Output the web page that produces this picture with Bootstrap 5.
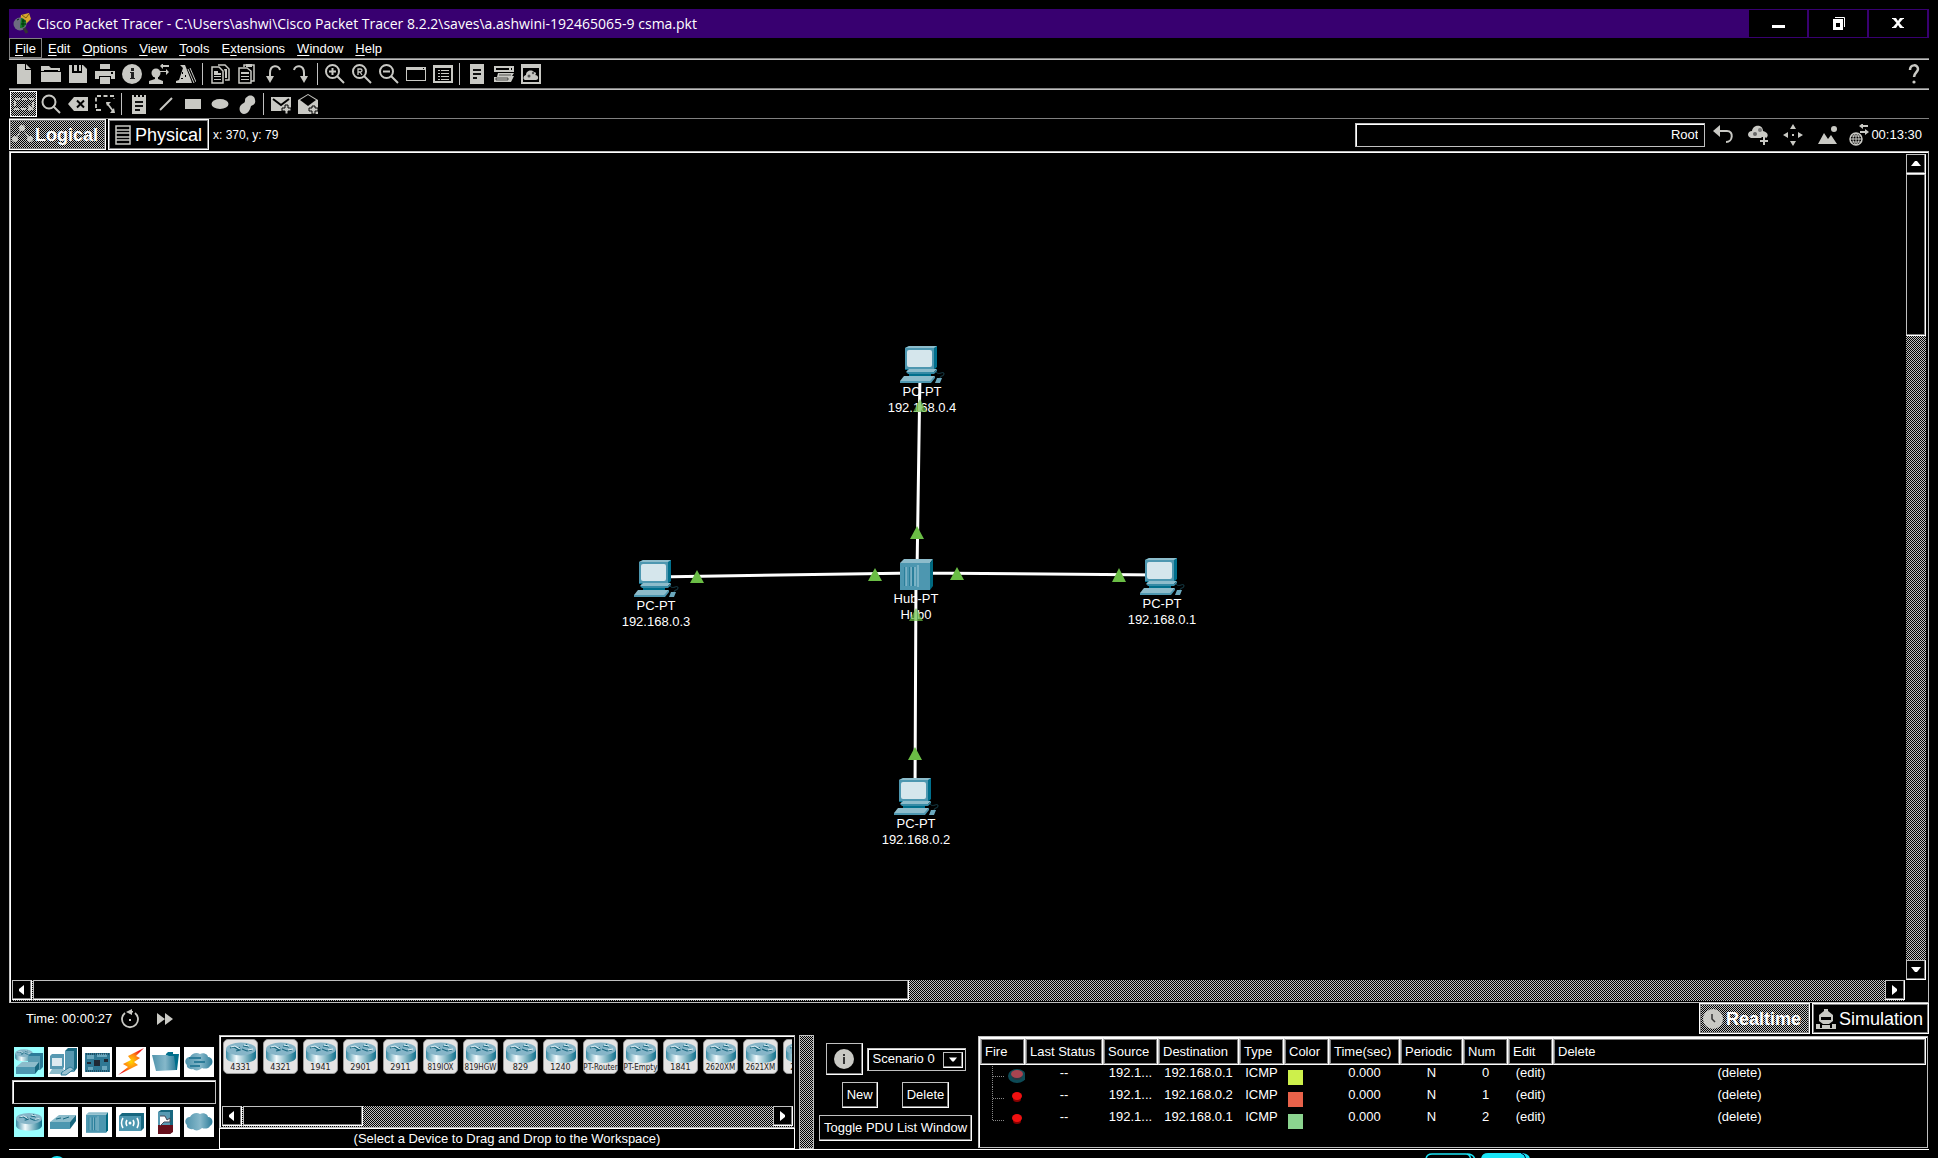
<!DOCTYPE html>
<html lang="en">
<head>
<meta charset="utf-8">
<meta name="viewport" content="width=device-width, initial-scale=1">
<title>Cisco Packet Tracer</title>
<link rel="stylesheet" href="https://cdn.jsdelivr.net/npm/bootstrap@5.3.0/dist/css/bootstrap.min.css">
<script src="https://cdn.jsdelivr.net/npm/bootstrap@5.3.0/dist/js/bootstrap.bundle.min.js"></script>
<style>
:root{--ic:#c9c9c4;--edge:#c0c0c0;--dim:#808080}
body{background:#000;color:#fff;font:13px/16px "Liberation Sans",Arial,sans-serif}
button{background:#000;color:inherit;padding:0;border:0;font:inherit}
svg{display:block;flex:none}
.app{height:100vh;padding:9px 9px 0}
.dither{background:conic-gradient(#c0c0c0 25%,#000 0 50%,#c0c0c0 0 75%,#000 0) 0 0/2px 2px}
.titlebar{height:29px;background:#380070;font:14px/29px "Open Sans",sans-serif}
.winbtn{width:58px;height:27px}
.winbtns{gap:2px;padding:1px 2px 1px 0}
.menurow{height:22px;border-bottom:1px solid var(--edge);box-shadow:inset 0 -1px var(--dim)}
.menurow button{height:20px;padding:1px 5px 0;border:1px solid transparent}
.menurow button.open{border-color:var(--dim)}
.menurow u{text-underline-offset:2px}
.toolrow{height:30px;padding:0 2px 2px 1px;border-bottom:1px solid var(--edge);box-shadow:inset 0 -1px var(--dim)}
.toolrow.second{height:29px;padding-bottom:1px;border-bottom-color:var(--dim);box-shadow:none}
.tool{width:27px;height:26px;display:flex;align-items:center;justify-content:center;color:var(--ic)}
.tool svg{width:20px;height:20px}
.tool.on{border:1px solid #fff}
.vsep{width:1px;height:22px;background:var(--edge);margin:0 3px}
.ic{fill:currentColor;color:var(--ic)}
.ln{fill:none;stroke:currentColor;stroke-width:2}
.raised{border:1px solid #fff;border-top-color:var(--edge);border-left-color:var(--edge);box-shadow:inset -1px -1px var(--dim)}
.sunken{border:1px solid var(--edge);box-shadow:inset 1px 1px #fff}
.modes{gap:2px}
.modebtn{height:31px;font-size:18px;line-height:20px;display:flex;align-items:center;gap:3px;border:1px solid #fff;box-shadow:inset 1px 1px var(--dim),inset -1px -1px var(--dim)}
.logical{width:97px;padding-left:2px;gap:0}.physical{width:101px;padding-left:6px;gap:4px}
.realtime{width:111px;padding-left:3px}.simulation{width:117px;padding-left:3px}
.navrow{height:32px;padding-bottom:1px}
.navrow .tiny{font-size:12px;padding-left:2px}
.rootbox{width:350px;height:24px;background:#000;color:#fff;text-align:right;padding:0 6px}
.tools{gap:8px;padding:0 7px 0 6px}
.navicons{gap:15px;margin-right:-6px}
.navicons svg:last-child{margin-left:-4px}
.workspace{border:1px solid var(--edge);box-shadow:inset 1px 1px #fff;padding:2px 1px 1px 2px;min-height:0}
.canvas-area{min-width:0;min-height:0}
.vbar{width:22px}.hbar{height:21px}
.vbar button{width:20px;height:20px}.hbar button{width:20px;height:20px}
.vthumb{height:162px;width:20px;background:#000}
.hthumb{height:20px;background:#000;margin-left:1px}
.arrow{display:flex;align-items:center;justify-content:center;fill:#fff}
.node{width:80px;text-align:center}
.node svg{margin:0 0 1px 18px}
.node.hub svg{margin:0 0 1px 24px}
.timerow{height:32px;padding:0 0 1px 17px}
.dock{height:115px;border-bottom:1px solid #fff}
.devcol{width:210px;padding:12px 0 0 3px;flex:none}
.devrow{gap:4px;padding-left:2px}
.devrow button{width:30px;height:30px;background:#fff;overflow:hidden}
.devrow button.sel{background:#9ff}
.devbox{width:204px;height:24px;margin:3px 0;background:#000;color:#fff}
.listcol{width:576px;flex:none}
.tiles{height:72px;padding:3px 0 0 3px;margin-right:2px;gap:5px;overflow:hidden}
.tile{width:35px;height:35px;border:1px solid #9a9a9a;border-radius:5px;background:#e4e4e4;color:#222;font:8px/8px "DejaVu Sans",sans-serif;flex:none;white-space:nowrap;display:flex;flex-direction:column;align-items:center;padding-top:2px}
.tile.long{font-family:"DejaVu Sans Condensed","DejaVu Sans",sans-serif}
.listbar{margin:-2px 1px 0 2px}
.hint{height:21px;border:1px solid #fff;line-height:20px}
.split{width:15px;margin:0 4px;border:1px solid var(--edge);flex:none}
.scen{width:155px;padding-top:8px;gap:7px;flex:none}
.scen button{height:26px}
.scen button.scinfo{width:37px;height:32px}
.scensel{appearance:none;width:99px;height:23px;background:#000;color:#fff;padding:0 5px;font:inherit;border-radius:0}
.scenarrow{right:3px;top:4px;width:20px;height:16px;pointer-events:none}
.pdu{flex:1 1 0;margin:1px 1px 1px 5px;padding:1px 1px 0;min-width:0}
.pdu table{table-layout:fixed;width:100%;border-collapse:separate;border-spacing:0}
.pdu th{height:27px;font-weight:400;padding:0 0 0 4px;border:1px solid #fff;box-shadow:inset 1px 1px var(--dim),inset -1px -1px var(--dim);white-space:nowrap;border-left-color:var(--edge)}
.pdu td{height:22px;padding:0 0 6px;text-align:center;white-space:nowrap}
.pdu td:first-child{padding:0}
.pdu td a{color:#fff;text-decoration:none}
.swatch{width:15px;height:15px;margin:2px 0 0 4px}
.pdu td.sw{padding:0}
.taskbar{height:8px;overflow:hidden;flex:none}
</style>
</head>
<body>
<svg width="0" height="0" class="position-absolute" aria-hidden="true">
<defs>
<linearGradient id="gr" x1="0" x2="1"><stop offset="0" stop-color="#3a8ba5"/><stop offset=".35" stop-color="#f2fafc"/><stop offset="1" stop-color="#10718c"/></linearGradient>
<radialGradient id="bolt"><stop offset="0" stop-color="#ffd800"/><stop offset=".5" stop-color="#ff8c10"/><stop offset="1" stop-color="#f01818"/></radialGradient>
<linearGradient id="teal" x1="0" x2="1"><stop offset="0" stop-color="#4f93ac"/><stop offset=".55" stop-color="#86b8ca"/><stop offset="1" stop-color="#2c7c99"/></linearGradient>
<symbol id="router" viewBox="0 0 30 22"><path d="M0 7v8c0 4 7 6 15 6s15-2 15-6V7z" fill="url(#gr)"/><ellipse cx="15" cy="7" rx="15" ry="6.5" fill="#86b5c8"/><path d="M4 6l4-1 5 3M10 9l4-1-1-3M26 8l-5 1-5-2M17 4l5 1-2-3" fill="none" stroke="#17677f" stroke-width="1.2"/><path d="M5 5l4-1 5 3M27 7l-5 1M18 3l5 1" fill="none" stroke="#e4f2f6" stroke-width="1"/></symbol>
<symbol id="pc" viewBox="0 0 45 37"><path d="M5 2l4-2h28v21l-3 3H5z" fill="#006f8c"/><path d="M5 2l4-2h28l-3 2z" fill="#8dbccb"/><path d="M5 2h29v21H5z" fill="#4d97b0"/><rect x="7" y="4" width="25" height="17" rx="2" fill="#d5e6ec"/><path d="M8 23h25l-1 2H7z" fill="#17677f"/><path d="M6 26l3-3h28l-3 3z" fill="#8dbccb"/><path d="M6 26h28l3-3v2l-3 3H8z" fill="#358aa5"/><path d="M9 28h22v3H9z" fill="#006f8c"/><path d="M4 30h31l-4 5H0z" fill="#8dbccb"/><path d="M0 35h30l5-5v2l-4 5H0z" fill="#4d97b0"/><path d="M37 32h5l-2 5h-5z" fill="#6ba8bd"/><path d="M36 26c3 4 8-2 8 2 0 3-4 1-4 4" fill="none" stroke="#173e49"/></symbol>
<symbol id="hub" viewBox="0 0 33 31"><path d="M0 4l4-4h29l-3 4z" fill="#8dbccb"/><path d="M30 4l3-4v27l-3 4z" fill="#00687f"/><path d="M0 4h30v27H0z" fill="#4d97b0"/><path d="M5 8v19M10 8v19M13 8v19" stroke="#2a7f9b" stroke-width="2"/><path d="M6 8v19M11 8v19M15 8v19M18 6v22" stroke="#a9cedb" stroke-width="1"/></symbol>
<symbol id="up" viewBox="0 0 10 10"><path d="M0 7h10L6 2H4z"/></symbol>
<symbol id="down" viewBox="0 0 10 10"><path d="M0 2h10L6 7H4z"/></symbol>
<symbol id="left" viewBox="0 0 10 10"><path d="M7 0v10L2 6V4z"/></symbol>
<symbol id="right" viewBox="0 0 10 10"><path d="M2 0v10l5-4V4z"/></symbol>
<symbol id="cloudy" viewBox="0 0 28 20"><path d="M5 5c2-4 7-5 10-3 3-2 8 0 8 3 5 0 6 7 2 9-1 3-6 3-8 2-3 3-7 3-9 1-4 1-7-2-6-4-3-2-2-8 3-8z" fill="url(#teal)"/></symbol>
</defs>
</svg>

<div class="app d-flex flex-column">
  <header class="titlebar d-flex align-items-center flex-shrink-0">
    <svg width="20" height="22" viewBox="0 0 20 22" class="mx-1"><path d="M8 2l8-2 2 6-5 5-6-3z" fill="#d8a72c"/><path d="M9 2l4 3 3-4" fill="none" stroke="#7b5a10"/><circle cx="7" cy="11" r="6.500" fill="#6d6d80"/><path d="M8 5a6 6 0 0 1 5 6 6 6 0 0 1-6 4z" fill="#117a22"/><path d="M4 7l2-1M9 8h4M8 11h5M10 6v8" stroke="#052c0c"/><path d="M11 15l3 5" stroke="#333" stroke-width="3"/></svg>
    <span>Cisco Packet Tracer - C:\Users\ashwi\Cisco Packet Tracer 8.2.2\saves\a.ashwini-192465065-9 csma.pkt</span>
    <div class="winbtns d-flex ms-auto">
      <button class="winbtn arrow" aria-label="Minimize"><svg width="14" height="14" viewBox="0 0 14 14"><path d="M1 8h13v3H1z"/></svg></button>
      <button class="winbtn arrow" aria-label="Restore"><svg width="14" height="14" viewBox="0 0 14 14"><path d="M2 2h10v11H2zM5 6v4h4V6z" fill-rule="evenodd"/><path d="M4 .5h9.500V10" fill="none" stroke="#fff"/></svg></button>
      <button class="winbtn arrow" aria-label="Close"><svg width="14" height="14" viewBox="0 0 14 14"><path d="M1 1h4l2 3 2-3h4v1h-1L8.500 6l3.500 4h1v1H9L7 8l-2 3H1v-1h1l3.500-4L2 2H1z"/></svg></button>
    </div>
  </header>

  <nav class="menurow d-flex flex-shrink-0" aria-label="Main menu">
    <button class="open"><u>F</u>ile</button><button><u>E</u>dit</button><button><u>O</u>ptions</button><button><u>V</u>iew</button><button><u>T</u>ools</button><button>E<u>x</u>tensions</button><button><u>W</u>indow</button><button><u>H</u>elp</button>
  </nav>

  <div class="toolrow d-flex align-items-center flex-shrink-0" role="toolbar" aria-label="Main toolbar">
    <button class="tool" aria-label="New"><svg class="ic" viewBox="0 0 20 20"><path d="M3 0h8v6h6v14H3z"/><path d="M12 0l5 5h-5z"/></svg></button>
    <button class="tool" aria-label="Open"><svg class="ic" viewBox="0 0 20 20"><path d="M0 2h8l2 2h9v3H0zM0 8h20v10H0z"/><path d="M3 6h14v2H3z" fill="#000"/></svg></button>
    <button class="tool" aria-label="Save"><svg class="ic" viewBox="0 0 20 20"><path d="M1 1h3v8h10V1h1l4 4v14H1z"/><path d="M6 1h3v6H6zM11 1h2v6h-2z"/></svg></button>
    <button class="tool" aria-label="Print"><svg class="ic" viewBox="0 0 20 20"><path d="M5 0h10v5H5zM0 7h20v8h-4v-3H4v3H0zM5 13h10v7H5z"/><path d="M16 8h2v2h-2z" fill="#000"/></svg></button>
    <button class="tool" aria-label="Information"><svg class="ic" viewBox="0 0 20 20"><circle cx="10" cy="10" r="10"/><path d="M9 4h3v3H9zM8 8h4v6h1v1H8v-1h1V9H8z" fill="#222"/></svg></button>
    <button class="tool" aria-label="User profile"><svg class="ic" viewBox="0 0 20 20"><circle cx="7" cy="9" r="4.500"/><path d="M6 12h3v3l5 2v3H0v-3l6-2zM11 2l3-3v2h6v2h-6v2zM20 8l-3-3v2h-6v1h6v3z"/></svg></button>
    <button class="tool" aria-label="Activity wizard"><svg class="ic" viewBox="0 0 20 20"><path d="M4 1l5 0 6 15 1 3H0v-2l3-1L7 4z"/><path d="M12 5l6 14M14 4l6 14" stroke="currentColor"/><path d="M6 8h1v2H6zM9 11h1v2H9zM5 14h2v1H5z" fill="#000"/></svg></button>
    <span class="vsep"></span>
    <button class="tool" aria-label="Copy"><svg class="ic" viewBox="0 0 20 20"><path d="M2 3h7l4 4v12H2z" fill="none" stroke="currentColor" stroke-width="1.500"/><path d="M8 1h7l4 4v11h-4" fill="none" stroke="currentColor" stroke-width="1.500"/><path d="M4 7h4v2h3v2H4zM4 12h7v1H4zM4 15h7v1H4zM14 5h3v9h-2V8z"/></svg></button>
    <button class="tool" aria-label="Paste"><svg class="ic" viewBox="0 0 20 20"><path d="M2 4h8l4 3v12H2zM7 3V1h10v16h-3" fill="none" stroke="currentColor" stroke-width="1.500"/><path d="M9 0h6v3H9zM4 8h8v2H4zM4 12h8v1H4zM4 15h8v1H4z"/></svg></button>
    <button class="tool" aria-label="Undo"><svg class="ic" viewBox="0 0 20 20"><path class="ln" d="M16 6c-1-5-10-6-10 3v6"/><path d="M2 12h8l-4 7z"/></svg></button>
    <button class="tool" aria-label="Redo"><svg class="ic" viewBox="0 0 20 20"><path class="ln" d="M3 6c1-5 10-6 10 3v5"/><path d="M9 12h8l-4 7z"/></svg></button>
    <span class="vsep"></span>
    <button class="tool" aria-label="Zoom in"><svg class="ic" viewBox="0 0 20 20"><circle class="ln" cx="7.500" cy="7.500" r="6.500"/><path class="ln" d="M12 12l7 7M4 7.500h7M7.500 4v7"/></svg></button>
    <button class="tool" aria-label="Zoom reset"><svg class="ic" viewBox="0 0 20 20"><circle class="ln" cx="7.500" cy="7.500" r="6.500"/><path class="ln" d="M12 12l7 7"/><path d="M6 11V5h2.500a1 1 0 0 1 0 3H6M8 8l2 3" fill="none" stroke="currentColor" stroke-width="1.300"/></svg></button>
    <button class="tool" aria-label="Zoom out"><svg class="ic" viewBox="0 0 20 20"><circle class="ln" cx="7.500" cy="7.500" r="6.500"/><path class="ln" d="M12 12l7 7M4 7.500h7"/></svg></button>
    <button class="tool" aria-label="Viewport"><svg class="ic" viewBox="0 0 20 20"><path d="M0 3h20v14H0zM1 6v10h18V6z" fill-rule="evenodd"/><path d="M17 4h1v1h-1z" fill="#000"/></svg></button>
    <button class="tool" aria-label="Workspace list"><svg class="ic" viewBox="0 0 20 20"><path d="M0 1h20v18H0zM2 4v13h16V4z" fill-rule="evenodd"/><path d="M5 6h2v1H5zM8 6h8v1H8zM5 9h2v1H5zM8 9h8v1H8zM5 12h2v1H5zM8 12h8v1H8zM5 15h2v1H5zM8 15h8v1H8z"/></svg></button>
    <span class="vsep"></span>
    <button class="tool" aria-label="Notes"><svg class="ic" viewBox="0 0 20 20"><path d="M3 0h14v20H3z"/><path d="M6 5h8v2H6zM6 9h8v2H6zM6 13h4v2H6z" fill="#111"/></svg></button>
    <button class="tool" aria-label="Custom devices"><svg class="ic" viewBox="0 0 20 20"><path d="M0 2h20v6H0z"/><path d="M2 4h13v2H2zM17 4h1v2h-1z" fill="#000"/><path d="M4 9h16l-2 3h2l-3 6H0v-5h3z"/><path d="M2 14h12v2H2zM5 11h12" stroke="#000" stroke-width=".6"/></svg></button>
    <button class="tool" aria-label="Cluster view"><svg class="ic" viewBox="0 0 20 20"><path d="M0 0h20v20H0zM2 4v14h16V4z" fill-rule="evenodd"/><path d="M4 16c-3-1-1-5 1-5 0-4 5-6 8-3 3 0 2 3 1 3 4 0 4 5 1 5z"/><circle cx="8" cy="12" r="1.500" fill="#555"/><circle cx="12" cy="9" r="1.200" fill="#555"/></svg></button>
    <button class="tool ms-auto" aria-label="Help"><svg class="ic" viewBox="0 0 20 20"><path d="M6 6c0-6 8-6 8-1 0 3-4 4-4 8" fill="none" stroke="currentColor" stroke-width="2.500"/><circle cx="10" cy="18" r="1.600"/></svg></button>
  </div>

  <div class="toolrow second d-flex align-items-center flex-shrink-0" role="toolbar" aria-label="Drawing toolbar">
    <button class="tool on dither" aria-label="Select"><svg class="ic" viewBox="0 0 20 20"><path d="M1 5h18v10H1z" fill="none" stroke="currentColor" stroke-width="2" stroke-dasharray="5 2"/><path d="M14 11l6 3-5 3z"/></svg></button>
    <button class="tool" aria-label="Inspect"><svg class="ic" viewBox="0 0 20 20"><circle class="ln" cx="8" cy="8" r="6.500"/><path class="ln" d="M12 12l7 7"/></svg></button>
    <button class="tool" aria-label="Delete"><svg class="ic" viewBox="0 0 20 20"><path d="M0 10l6-7h14v14H6z"/><path d="M9 6.500l7 7M16 6.500l-7 7" stroke="#000" stroke-width="2"/></svg></button>
    <button class="tool" aria-label="Resize shape"><svg class="ic" viewBox="0 0 20 20"><path d="M1 14V2h18v3" fill="none" stroke="currentColor" stroke-width="1.800" stroke-dasharray="4 2.500"/><path d="M1 16h5M12 9l6 8" stroke="currentColor" stroke-width="1.800"/><path d="M11 8h5l-4 4zM20 19h-5l4-5z"/></svg></button>
    <span class="vsep"></span>
    <button class="tool" aria-label="Place note"><svg class="ic" viewBox="0 0 20 20"><path d="M3 1h2v2h2V1h2v2h2V1h2v2h2V1h2v19H3z"/><path d="M6 7h8v2H6zM6 11h8v2H6zM6 15h5v2H6z" fill="#111"/></svg></button>
    <button class="tool" aria-label="Line"><svg class="ic" viewBox="0 0 20 20"><path class="ln" stroke-width="3" d="M4 16L16 4"/></svg></button>
    <button class="tool" aria-label="Rectangle"><svg class="ic" viewBox="0 0 20 20"><path d="M2 5h16v10H2z"/></svg></button>
    <button class="tool" aria-label="Ellipse"><svg class="ic" viewBox="0 0 20 20"><ellipse cx="10" cy="10" rx="8.500" ry="5"/></svg></button>
    <button class="tool" aria-label="Freeform"><svg class="ic" viewBox="0 0 20 20"><path d="M10 3c3-3 8-1 8 3 1 3-1 5-4 6-1 4-3 8-7 8s-6-6-3-9c2-2 4-2 4-4 0-2 0-3 2-4z"/></svg></button>
    <span class="vsep"></span>
    <button class="tool" aria-label="Add simple PDU"><svg class="ic" viewBox="0 0 20 20"><path d="M0 3h20v14H0z"/><path d="M2 5l8 6 8-6" fill="none" stroke="#000" stroke-width="2"/><path d="M14 11h3v3h3v3h-3v3h-3v-3h-3v-3h3z" stroke="#000"/></svg></button>
    <button class="tool" aria-label="Add complex PDU"><svg class="ic" viewBox="0 0 20 20"><path d="M0 6l10-6 10 6v14H0z"/><path d="M2 6l8-5 8 5-8 6z" fill="#000"/><path d="M14 12h3v2h3v3h-3v3h-3v-3h-3v-3h3z" stroke="#000"/></svg></button>
  </div>

  <div class="navrow modes d-flex align-items-start flex-shrink-0">
    <button class="modebtn logical dither fw-bold"><svg class="ic" width="23" height="20" viewBox="0 0 23 20"><path d="M4 14L10 3l8 11" fill="none" stroke="currentColor"/><circle cx="10" cy="3" r="3"/><circle cx="3" cy="14" r="3"/><circle cx="18" cy="14" r="3"/></svg>Logical</button>
    <button class="modebtn physical"><svg class="ic" width="16" height="20" viewBox="0 0 16 20"><path d="M1 1h14v18H1zM1 5h14M1 8h14M1 12h14M1 15h14" fill="none" stroke="currentColor" stroke-width="1.500"/></svg>Physical</button>
    <span class="tiny align-self-center">x: 370, y: 79</span>
    <div class="tools d-flex align-items-center ms-auto align-self-center">
      <input class="rootbox sunken" aria-label="Current location" value="Root">
      <div class="navicons d-flex">
      <svg class="ic" width="20" height="22" viewBox="0 0 20 22"><path class="ln" d="M5 7h9c7 0 6 11-1 11"/><path d="M0 7l7-6v12z"/></svg>
      <svg class="ic" width="20" height="22" viewBox="0 0 20 22"><path d="M3 14c-5-2-3-7 1-7 1-7 11-7 11 0 5 1 6 5 3 7z"/><circle cx="7" cy="10" r="2" fill="#666"/><circle cx="12" cy="6" r="2" fill="#777"/><path d="M11 17h9M15.500 13v9" stroke="#000" stroke-width="4"/><path class="ln" d="M12 17h8M16 13v8"/></svg>
      <svg class="ic" width="20" height="22" viewBox="0 0 20 22"><path d="M10 0l3 5H7zM10 22l3-5H7zM0 11l5-3v6zM20 11l-5-3v6zM9 10h2v2H9z"/></svg>
      <svg class="ic" width="20" height="22" viewBox="0 0 20 22"><path d="M0 20l6-11 4 6 3-4 6 9z"/><circle cx="16" cy="5" r="3"/></svg>
      <svg class="ic" width="20" height="22" viewBox="0 0 20 22"><circle cx="7" cy="15" r="6" fill="none" stroke="currentColor" stroke-width="1.500"/><path d="M1 15h12M7 9v12M2 12h10M2 18h10M7 9c-4 3-4 9 0 12 4-3 4-9 0-12" fill="none" stroke="currentColor"/><path d="M10 2l4-3v2h5v2h-5v2zM20 8l-4-3v2h-5v2h5v2z"/></svg>
      </div>
      <span>00:13:30</span>
    </div>
  </div>

  <main class="workspace flex-fill d-flex">
    <div class="canvas-area d-flex flex-column flex-fill">
      <div class="flex-fill position-relative overflow-hidden">
        <!-- links between the hub and the PCs, in scene coordinates -->
        <svg class="position-absolute top-0 start-0" width="1200" height="720" viewBox="12 154 1200 720"><g stroke="#fff" stroke-width="3"><path d="M656 577L916 573M916 573l246 2M917 573l3-200M916 573l-1 220"/></g></svg>
        <div class="node position-absolute" style="left:870px;top:192px"><svg width="45" height="37"><use href="#pc"/></svg>PC-PT<br>192.168.0.4</div>
        <div class="node position-absolute" style="left:604px;top:406px"><svg width="45" height="37"><use href="#pc"/></svg>PC-PT<br>192.168.0.3</div>
        <div class="node position-absolute" style="left:1110px;top:404px"><svg width="45" height="37"><use href="#pc"/></svg>PC-PT<br>192.168.0.1</div>
        <div class="node position-absolute" style="left:864px;top:624px"><svg width="45" height="37"><use href="#pc"/></svg>PC-PT<br>192.168.0.2</div>
        <div class="node hub position-absolute" style="left:864px;top:405px"><svg width="33" height="31"><use href="#hub"/></svg>Hub-PT<br>Hub0</div>
        <svg class="position-absolute top-0 start-0" width="1200" height="720" viewBox="12 154 1200 720"><g fill="#6abd45"><path d="M917 526l7 13h-14zM697 570l7 13h-14zM875 568l7 13h-14zM957 567l7 13h-14zM1119 568l7 14h-14zM915 747l7 13h-14z"/><path d="M920 399l7 13h-14zM916 608l7 13h-14z" opacity=".7"/></g></svg>
      </div>
      <div class="hbar d-flex dither flex-shrink-0">
        <button class="arrow raised" aria-label="Scroll left"><svg width="10" height="10"><use href="#left"/></svg></button>
        <div class="hthumb raised" style="width:46.3%"></div>
        <button class="arrow raised ms-auto" aria-label="Scroll right"><svg width="10" height="10"><use href="#right"/></svg></button>
      </div>
    </div>
    <div class="vbar d-flex flex-column align-items-center flex-shrink-0">
      <div class="d-flex flex-column align-items-center flex-fill dither">
        <button class="arrow raised" aria-label="Scroll up"><svg width="10" height="10"><use href="#up"/></svg></button>
        <div class="vthumb raised"></div>
        <button class="arrow raised mt-auto" aria-label="Scroll down"><svg width="10" height="10"><use href="#down"/></svg></button>
      </div>
      <div class="hbar"></div>
    </div>
  </main>

  <div class="timerow d-flex align-items-center flex-shrink-0">
    <span>Time: 00:00:27</span>
    <svg class="ic ms-2" width="20" height="20" viewBox="0 0 20 20"><path d="M5 4a8 8 0 1 0 10 0" fill="none" stroke="currentColor" stroke-width="1.800"/><path d="M6 3l6-3v6z"/><path d="M9 2h4v1.500H9zM9 10h2v2H9z"/></svg>
    <svg class="ic ms-3" width="18" height="14" viewBox="0 0 18 14"><path d="M1 1l8 6-8 6zM9 1l8 6-8 6z"/></svg>
    <div class="modes d-flex ms-auto">
      <button class="modebtn realtime dither fw-bold"><svg class="ic" width="20" height="20" viewBox="0 0 20 20"><circle cx="10" cy="10" r="10"/><path d="M9 5v5l3 3" fill="none" stroke="#333" stroke-width="1.500"/></svg>Realtime</button>
      <button class="modebtn simulation"><svg class="ic" width="20" height="20" viewBox="0 0 20 20"><path d="M8 0h4v2l5 4v6l-4 3H7l-4-3V6l5-4z"/><path d="M0 15h4v4h2v-3h8v3h2v-4h4v5H0z"/><path d="M5 8h10v3H5z" fill="#000"/></svg>Simulation</button>
    </div>
  </div>

  <section class="dock d-flex flex-shrink-0">
    <div class="devcol">
      <div class="devrow d-flex">
        <button class="sel" aria-label="Network devices"><svg width="30" height="30" viewBox="0 0 30 30"><g transform="translate(1 2)"><use href="#router" width="18" height="13"/></g><path d="M14 9l3-3h12v14l-3 3H14z" fill="#2c7c99"/><path d="M14 9h12v14H14z" fill="#5b9db3"/><path d="M2 20l6-5h17l-4 5z" fill="#8dbccb"/><path d="M2 20h19v7H2z" fill="#4d97b0"/><path d="M21 20l4-5v7l-4 5z" fill="#17677f"/></svg></button>
        <button aria-label="End devices"><svg width="30" height="30" viewBox="0 0 30 30"><path d="M17 4l3-3h9v20l-3 4h-9z" fill="#17677f"/><path d="M17 4h9v21h-9z" fill="#5799b2"/><path d="M2 9l2-2h12v13l-1 2H2z" fill="#5799b2"/><path d="M4 11h10v8H4z" fill="#dceaf0"/><path d="M4 22h12l-3 5H1z" fill="#8dbccb"/><path d="M14 25l8-5 4 2-8 6h-5z" fill="#9cc3d2" stroke="#2c7c99"/></svg></button>
        <button aria-label="Components"><svg width="30" height="30" viewBox="0 0 30 30"><path d="M3 6h25v19H3z" fill="#2f7894"/><path d="M5 8h7v4H5zM15 7h10v3H15zM6 20h5v3H6zM20 19h5v4h-5z" fill="#6aa7bd"/><path d="M12 13h6v6h-6zM22 12h4v3h-4zM5 15h4v2H5z" fill="#202833"/><path d="M4 7h23M4 24h23" stroke="#123" stroke-dasharray="1 1"/></svg></button>
        <button aria-label="Connections"><svg width="30" height="30" viewBox="0 0 30 30"><path d="M28 1L12 9l3 4-8 4 5 3L2 28l20-10-4-3 6-4-4-2z" fill="url(#bolt)"/></svg></button>
        <button aria-label="Miscellaneous"><svg width="30" height="30" viewBox="0 0 30 30"><path d="M16 7l2-2h5v2h6l-2 16H13z" fill="#006f8c"/><path d="M2 8h15l2 1h5l2 14-20 1z" fill="url(#teal)"/></svg></button>
        <button aria-label="Multiuser connection"><svg width="30" height="30" viewBox="0 0 30 30"><g transform="translate(1 5)"><use href="#cloudy" width="28" height="20"/></g><path d="M5 11h12M10 15h11M6 19h10" stroke="#2c7c99" stroke-width="2"/></svg></button>
      </div>
      <input class="devbox sunken d-block" aria-label="Device search">
      <div class="devrow d-flex">
        <button class="sel" aria-label="Routers"><svg width="30" height="30" viewBox="0 0 30 30"><g transform="translate(2 5)"><use href="#router" width="26" height="20"/></g></svg></button>
        <button aria-label="Switches"><svg width="30" height="30" viewBox="0 0 30 30"><path d="M2 15l9-7h17l-6 7z" fill="#8dbccb"/><path d="M2 15h20v7H2z" fill="#4d97b0"/><path d="M22 15l6-7v6l-6 8z" fill="#17677f"/><path d="M8 12l5-1M15 12l6-2" stroke="#17677f"/></svg></button>
        <button aria-label="Hubs"><svg width="30" height="30" viewBox="0 0 30 30"><g transform="translate(4 5)"><use href="#hub" width="22" height="21"/></g></svg></button>
        <button aria-label="Wireless devices"><svg width="30" height="30" viewBox="0 0 30 30"><path d="M3 9l3-3h22v15l-3 3H3z" fill="#17677f"/><path d="M3 9h22v15H3z" fill="#4d97b0"/><circle cx="14" cy="16" r="1.500" fill="#fff"/><path d="M11 13q-2 3 0 6M17 13q2 3 0 6M7 11q-3 5 0 10M21 11q3 5 0 10" fill="none" stroke="#fff" stroke-width="1.500"/></svg></button>
        <button aria-label="Security"><svg width="30" height="30" viewBox="0 0 30 30"><path d="M8 5l3-2h12v21l-3 3H8z" fill="#17677f"/><path d="M8 5h12v14H8z" fill="#5799b2"/><path d="M8 18h15v7l-3 2H8z" fill="#67101c"/><path d="M10 9h5l2 4 3-2v4h-6l-4 4" fill="#fff" stroke="#445"/></svg></button>
        <button aria-label="WAN emulation"><svg width="30" height="30" viewBox="0 0 30 30"><g transform="translate(1 5)"><use href="#cloudy" width="28" height="20"/></g></svg></button>
      </div>
    </div>

    <div class="listcol d-flex flex-column">
      <div class="sunken flex-fill d-flex flex-column">
        <div class="tiles d-flex align-items-start flex-shrink-0">
          <button class="tile"><svg width="30" height="22"><use href="#router"/></svg>4331</button>
          <button class="tile"><svg width="30" height="22"><use href="#router"/></svg>4321</button>
          <button class="tile"><svg width="30" height="22"><use href="#router"/></svg>1941</button>
          <button class="tile"><svg width="30" height="22"><use href="#router"/></svg>2901</button>
          <button class="tile"><svg width="30" height="22"><use href="#router"/></svg>2911</button>
          <button class="tile long"><svg width="30" height="22"><use href="#router"/></svg>819IOX</button>
          <button class="tile long"><svg width="30" height="22"><use href="#router"/></svg>819HGW</button>
          <button class="tile"><svg width="30" height="22"><use href="#router"/></svg>829</button>
          <button class="tile"><svg width="30" height="22"><use href="#router"/></svg>1240</button>
          <button class="tile long"><svg width="30" height="22"><use href="#router"/></svg>PT-Router</button>
          <button class="tile long"><svg width="30" height="22"><use href="#router"/></svg>PT-Empty</button>
          <button class="tile"><svg width="30" height="22"><use href="#router"/></svg>1841</button>
          <button class="tile long"><svg width="30" height="22"><use href="#router"/></svg>2620XM</button>
          <button class="tile long"><svg width="30" height="22"><use href="#router"/></svg>2621XM</button>
          <button class="tile"><svg width="30" height="22"><use href="#router"/></svg>2811</button>
        </div>
        <div class="hbar listbar d-flex dither">
          <button class="arrow raised" aria-label="Scroll left"><svg width="10" height="10"><use href="#left"/></svg></button>
          <div class="hthumb raised" style="width:21%"></div>
          <button class="arrow raised ms-auto" aria-label="Scroll right"><svg width="10" height="10"><use href="#right"/></svg></button>
        </div>
      </div>
      <div class="hint text-center">(Select a Device to Drag and Drop to the Workspace)</div>
    </div>

    <div class="split dither"></div>

    <div class="scen d-flex flex-column align-items-center">
      <div class="d-flex align-items-center gap-1">
        <button class="raised arrow scinfo" aria-label="Scenario information"><svg class="ic" width="20" height="20" viewBox="0 0 20 20"><circle cx="10" cy="10" r="10"/><path d="M9 5h2v2H9zM9 8h2v7H9z" fill="#333"/></svg></button>
        <div class="position-relative">
          <select class="scensel sunken d-block" aria-label="Scenario"><option>Scenario 0</option></select>
          <span class="scenarrow arrow raised position-absolute"><svg width="8" height="8"><use href="#down"/></svg></span>
        </div>
      </div>
      <div class="d-flex gap-4">
        <button class="raised px-1">New</button>
        <button class="raised px-1">Delete</button>
      </div>
      <button class="raised px-1 text-nowrap">Toggle PDU List Window</button>
    </div>

    <div class="pdu sunken">
      <table>
        <colgroup><col style="width:45px"><col style="width:78px"><col style="width:55px"><col style="width:81px"><col style="width:45px"><col style="width:45px"><col style="width:71px"><col style="width:63px"><col style="width:45px"><col style="width:45px"><col></colgroup>
        <thead><tr><th>Fire</th><th>Last Status</th><th>Source</th><th>Destination</th><th>Type</th><th>Color</th><th>Time(sec)</th><th>Periodic</th><th>Num</th><th>Edit</th><th>Delete</th></tr></thead>
        <tbody>
          <tr><td><svg width="45" height="22" viewBox="0 0 45 22"><path d="M12.500 1v21M13 11.500h12" stroke="#888" stroke-dasharray="1 1"/><ellipse cx="37" cy="11" rx="9" ry="7" fill="#0d4a56"/><ellipse cx="37" cy="12" rx="5" ry="3" fill="#2b3640"/><ellipse cx="37" cy="9" rx="6" ry="4" fill="#a94450"/></svg></td><td>--</td><td>192.1...</td><td>192.168.0.1</td><td>ICMP</td><td class="sw"><div class="swatch" style="background:#cdf04b"></div></td><td>0.000</td><td>N</td><td>0</td><td><a href="#">(edit)</a></td><td><a href="#">(delete)</a></td></tr>
          <tr><td><svg width="45" height="22" viewBox="0 0 45 22"><path d="M12.500 0v22M13 11.500h12" stroke="#888" stroke-dasharray="1 1"/><ellipse cx="37" cy="12" rx="4" ry="3" fill="#800"/><ellipse cx="37" cy="9" rx="5" ry="4" fill="#f01010"/></svg></td><td>--</td><td>192.1...</td><td>192.168.0.2</td><td>ICMP</td><td class="sw"><div class="swatch" style="background:#e8624a"></div></td><td>0.000</td><td>N</td><td>1</td><td><a href="#">(edit)</a></td><td><a href="#">(delete)</a></td></tr>
          <tr><td><svg width="45" height="22" viewBox="0 0 45 22"><path d="M12.500 0v12M13 11.500h12" stroke="#888" stroke-dasharray="1 1"/><ellipse cx="37" cy="12" rx="4" ry="3" fill="#800"/><ellipse cx="37" cy="9" rx="5" ry="4" fill="#f01010"/></svg></td><td>--</td><td>192.1...</td><td>192.168.0.1</td><td>ICMP</td><td class="sw"><div class="swatch" style="background:#8bd48f"></div></td><td>0.000</td><td>N</td><td>2</td><td><a href="#">(edit)</a></td><td><a href="#">(delete)</a></td></tr>
        </tbody>
      </table>
    </div>
  </section>
  <div class="taskbar d-flex justify-content-between align-items-end">
    <svg width="80" height="7" viewBox="0 0 80 7"><circle cx="48" cy="14" r="9" fill="#19e3f5"/></svg>
    <svg width="512" height="7" viewBox="1417 1151 512 7"><path d="M1426 1160q0-6 6-6h34q4 0 5 6M1467 1154q7 0 8 6" fill="none" stroke="#19e3f5" stroke-width="1.500"/><path d="M1481 1160q0-7 7-7h32q10 0 10 7z" fill="#19e3f5"/><path d="M1521 1153q4 1 5 6" fill="none" stroke="#003"/></svg>
  </div>
</div>
</body>
</html>
